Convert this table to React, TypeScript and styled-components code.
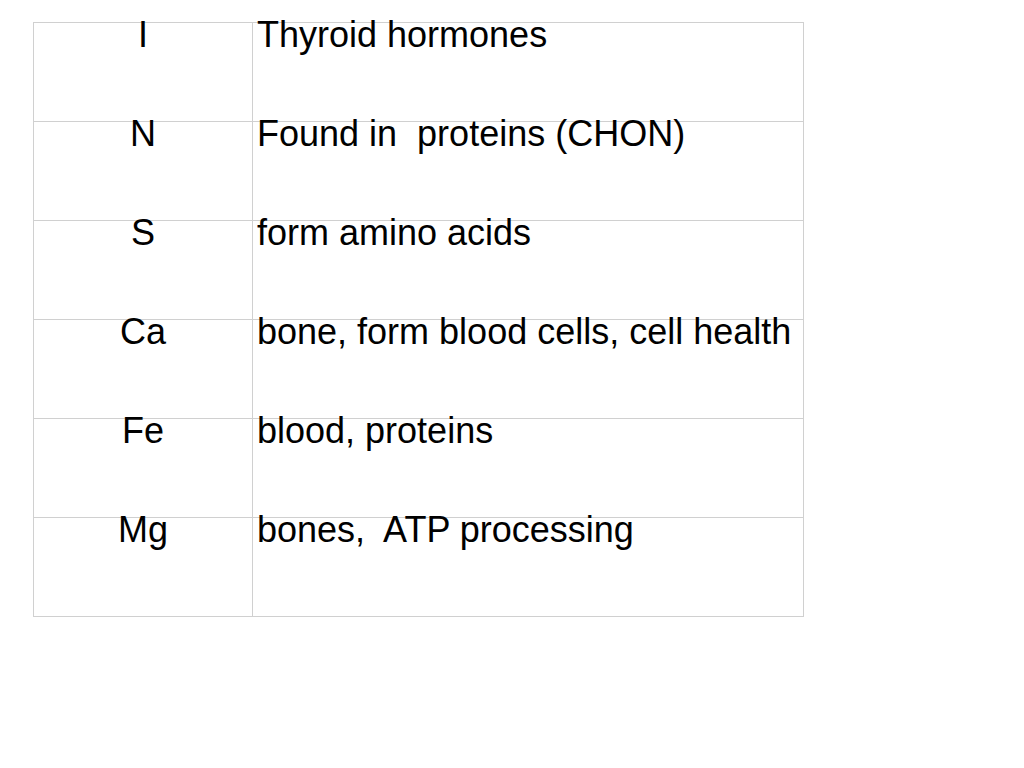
import { createGlobalStyle, styled } from 'styled-components'

const GlobalStyle = createGlobalStyle`
  body {
    margin: 0;
    background: #ffffff;
    font-family: "Liberation Sans", Arial, sans-serif;
  }
`

const rows = [
  { el: 'I', use: 'Thyroid hormones' },
  { el: 'N', use: 'Found in  proteins (CHON)' },
  { el: 'S', use: 'form amino acids' },
  { el: 'Ca', use: 'bone, form blood cells, cell health' },
  { el: 'Fe', use: 'blood, proteins' },
  { el: 'Mg', use: 'bones,  ATP processing' },
]

export default function App() {
  return (
    <>
      <GlobalStyle />
      <Page>
        <Table>
          {rows.map((r) => (
            <Row key={r.el}>
              <Cell $center>
                <Text>{r.el}</Text>
              </Cell>
              <Cell>
                <Text>{r.use}</Text>
              </Cell>
            </Row>
          ))}
        </Table>
      </Page>
    </>
  )
}

const Page = styled.div`
  padding: 22px 0 0 33px;
`

const Table = styled.div`
  display: grid;
  grid-template-columns: 219px 551px;
  width: max-content;
  border-top: 1px solid #d0d0d0;
  border-left: 1px solid #d0d0d0;
`

const Row = styled.div`
  display: contents;
`

const Cell = styled.div<{ $center?: boolean }>`
  box-sizing: border-box;
  height: 99px;
  padding-left: ${(p) => (p.$center ? '0' : '4px')};
  text-align: ${(p) => (p.$center ? 'center' : 'left')};
  border-right: 1px solid #d0d0d0;
  border-bottom: 1px solid #d0d0d0;
  white-space: pre;
`

const Text = styled.div`
  margin-top: -9px;
  font-size: 36px;
  color: #000000;
`
